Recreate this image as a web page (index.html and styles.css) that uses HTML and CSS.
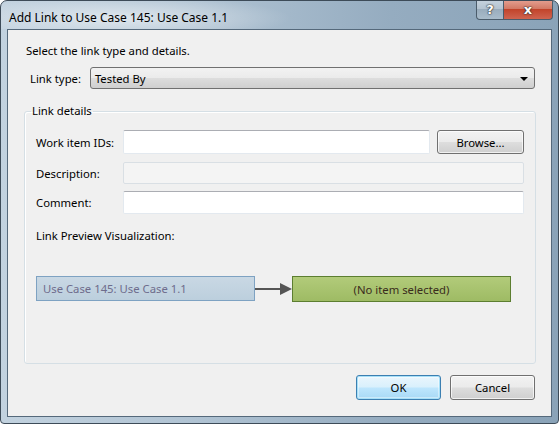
FILE: index.html
```html
<!DOCTYPE html>
<html>
<head>
<meta charset="utf-8">
<link rel="stylesheet" href="styles.css">
</head>
<body>
<div class="window">
  <div class="titlebar">
    <span class="title">Add Link to Use Case 145: Use Case 1.1</span>
    <div class="caption-btns">
      <div class="cap-btn help">?</div>
      <div class="cap-btn close">x</div>
    </div>
  </div>
  <div class="client">
    <p class="intro">Select the link type and details.</p>
    <div class="linktype">
      <span class="lt-label">Link type:</span>
      <div class="select">Tested By<span class="caret"></span></div>
    </div>
    <fieldset class="group">
      <legend>Link details</legend>
      <div class="field first">
        <span class="flabel">Work item IDs:</span>
        <div class="input ids"></div>
        <div class="btn browse">Browse...</div>
      </div>
      <div class="field desc">
        <span class="flabel">Description:</span>
        <div class="input wide disabled"></div>
      </div>
      <div class="field comment">
        <span class="flabel">Comment:</span>
        <div class="input wide tall"></div>
      </div>
      <div class="preview-label">Link Preview Visualization:</div>
      <div class="preview">
        <div class="node src">Use Case 145: Use Case 1.1</div>
        <svg class="arrow" width="37" height="14" viewBox="0 0 37 14">
          <rect x="0" y="6" width="27" height="2" fill="#555"/>
          <polygon points="25,1 37,7 25,13" fill="#555"/>
        </svg>
        <div class="node dst">(No item selected)</div>
      </div>
    </fieldset>
    <div class="actions">
      <div class="btn ok">OK</div>
      <div class="btn cancel">Cancel</div>
    </div>
  </div>
</div>
</body>
</html>
```
FILE: styles.css
```css
html, body {
  margin: 0;
  padding: 0;
  background: #ffffff;
}
body {
  font-family: "Noto Sans", "Open Sans", sans-serif;
  font-size: 11.3px;
  color: #000;
}
.window {
  width: 559px;
  height: 424px;
  box-sizing: border-box;
  border: 1px solid #3d4b58;
  border-radius: 7px 7px 4px 4px;
  background: linear-gradient(to right, #c2d2df 0%, #b0c3d3 35%, #95acc0 70%, #8aa3b8 100%);
  display: flex;
  flex-direction: column;
  overflow: hidden;
}
.titlebar {
  height: 28px;
  display: flex;
  align-items: flex-start;
  justify-content: space-between;
  background: radial-gradient(ellipse 170px 22px at 120px 17px, rgba(255,255,255,0.55), rgba(255,255,255,0) 100%);
}
.title {
  margin-top: 9px;
  margin-left: 8px;
  font-size: 12px;
  line-height: 16px;
  color: #000;
}
.caption-btns {
  display: flex;
  margin-right: 5px;
  margin-top: -1px;
}
.cap-btn {
  height: 20px;
  box-sizing: border-box;
  border: 1px solid #4b5c6b;
  border-top: none;
  color: #fff;
  font-weight: bold;
  text-align: center;
  font-family: "DejaVu Sans", sans-serif;
  line-height: 19px;
  text-shadow: 0 0 1px #333, 0 0 1px #333, 0 0 2px #333;
}
.help {
  width: 28px;
  border-radius: 0 0 0 4px;
  background: linear-gradient(#c6d3de 0%, #b5c4d1 45%, #9aadbd 50%, #a9bccb 100%);
  font-size: 13px;
}
.close {
  width: 49px;
  border-left: none;
  border-radius: 0 0 4px 0;
  background: linear-gradient(#e5a192 0%, #d37a66 45%, #c2442b 50%, #cf6450 100%);
  font-size: 13px;
}
.client {
  margin: 0 6px 0 6px;
  height: 386px;
  border: 1px solid #55697b;
  background: #f0f0f0;
  box-sizing: content-box;
  padding: 0 16px 0 0;
  display: flex;
  flex-direction: column;
}
.intro {
  margin: 13px 0 0 18px;
  line-height: 16px;
}
.linktype {
  margin-top: 8px;
  display: flex;
  align-items: center;
  height: 22px;
}
.lt-label {
  width: 60px;
  margin-left: 22px;
}
.select {
  width: 446px;
  height: 22px;
  box-sizing: border-box;
  border: 1px solid #707070;
  border-radius: 3px;
  background: linear-gradient(#f2f2f2 0%, #ebebeb 48%, #dddddd 52%, #cfcfcf 100%);
  display: flex;
  align-items: center;
  padding-left: 4px;
  position: relative;
}
.caret {
  position: absolute;
  right: 6px;
  top: 9px;
  width: 0;
  height: 0;
  border-left: 4px solid transparent;
  border-right: 4px solid transparent;
  border-top: 4px solid #000;
}
.group {
  margin: 14px 0 0 16px;
  width: 512px;
  box-sizing: border-box;
  border: 1px solid #d5dfe5;
  border-radius: 3px;
  box-shadow: inset 1px 1px 0 #fff;
  padding: 0 10px 61px 11px;
  min-width: 0;
}
.group legend {
  padding: 0 1px;
  margin-left: -5px;
  line-height: 16px;
}
.field {
  display: flex;
  align-items: center;
}
.field.first { margin-top: 11px; height: 24px; }
.field.desc { margin-top: 8px; height: 22px; }
.field.comment { margin-top: 7px; height: 23px; }
.flabel {
  width: 87px;
  flex: none;
}
.input {
  box-sizing: border-box;
  height: 100%;
  background: #fff;
  border: 1px solid #e3e9ef;
  border-top-color: #abadb3;
  border-radius: 2px;
}
.input.ids { width: 307px; }
.input.wide { width: 401px; }
.input.disabled {
  background: #f4f4f4;
  border-color: #d9dfe4;
}
.btn {
  box-sizing: border-box;
  height: 24px;
  border: 1px solid #707070;
  border-radius: 3px;
  background: linear-gradient(#f2f2f2 0%, #ebebeb 48%, #dddddd 52%, #cfcfcf 100%);
  box-shadow: inset 0 0 0 1px rgba(255,255,255,0.7);
  display: flex;
  align-items: center;
  justify-content: center;
}
.browse {
  width: 87px;
  margin-left: 7px;
}
.preview-label {
  margin-top: 14px;
  line-height: 16px;
}
.preview {
  margin-top: 32px;
  display: flex;
  align-items: flex-start;
}
.node {
  width: 219px;
  height: 25px;
  box-sizing: border-box;
  display: flex;
  align-items: center;
}
.src {
  background: linear-gradient(#c9d8e4, #bccfdd);
  border: 1px solid #7ea2c2;
  color: #6e6c8c;
  padding-left: 6px;
}
.arrow {
  margin: 6px 0 0 0;
  flex: none;
}
.dst {
  background: linear-gradient(#b2cb7a, #9ebb64);
  border: 1px solid #5c7e30;
  color: #3a2c1c;
  justify-content: center;
  height: 26px;
}
.actions {
  margin-top: 11px;
  display: flex;
  justify-content: flex-end;
  gap: 9px;
}
.actions .btn {
  width: 85px;
  height: 25px;
}
.ok {
  border-color: #3c7fb1 !important;
  box-shadow: inset 0 0 0 1px #a7e0f8, inset 0 0 0 2px rgba(255,255,255,0.4) !important;
  background: linear-gradient(#eaf6fd 0%, #d9f0fc 48%, #bee6fd 52%, #a7d9f5 100%) !important;
}
```
